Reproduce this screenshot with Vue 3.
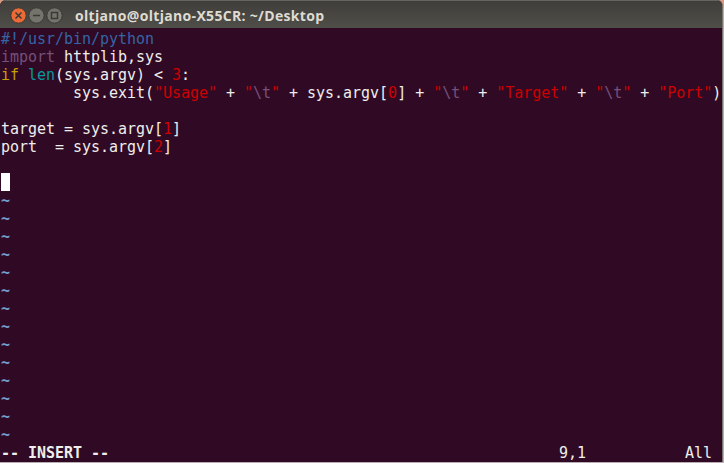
<script setup>
const c = (t, k = 'fg') => ({ t, k })
const lines = [
  [c('#!/usr/bin/python', 'comment')],
  [c('import', 'pre'), c(' httplib,sys')],
  [c('if', 'kw'), c(' '), c('len', 'fn'), c('(sys.argv) < '), c('3', 'num'), c(':')],
  [c('        sys.exit('), c('"Usage"', 'str'), c(' + '), c('"', 'str'), c('\\t', 'pre'), c('"', 'str'), c(' + sys.argv['), c('0', 'num'), c('] + '), c('"', 'str'), c('\\t', 'pre'), c('"', 'str'), c(' + '), c('"Target"', 'str'), c(' + '), c('"', 'str'), c('\\t', 'pre'), c('"', 'str'), c(' + '), c('"Port"', 'str'), c(')')],
  [c(' ')],
  [c('target = sys.argv['), c('1', 'num'), c(']')],
  [c('port  = sys.argv['), c('2', 'num'), c(']')],
  [c(' ')],
  [c(' ', 'cursor')],
  ...Array.from({ length: 14 }, () => [c('~', 'tilde')]),
  [c('-- INSERT --', 'bold'), c(' '.repeat(50) + '9,1' + ' '.repeat(11) + 'All')],
]
const buttons = [
  { name: 'close', glyph: 'M-3-3L3 3M3-3L-3 3' },
  { name: 'min', glyph: 'M-3.5 0H3.5' },
  { name: 'max', glyph: 'M-3-3H3V3H-3Z' },
]
</script>

<template>
  <div class="window">
    <header class="titlebar">
      <div class="buttons">
        <svg v-for="b in buttons" :key="b.name" class="btn" :class="b.name" viewBox="-8.5 -8.5 17 17" width="17" height="17">
          <circle r="7.7" class="face" />
          <path :d="b.glyph" class="glyph" />
        </svg>
      </div>
      <span class="title">oltjano@oltjano-X55CR: ~/Desktop</span>
    </header>
    <main class="term">
      <div v-for="(line, i) in lines" :key="i" class="row"><span v-for="(s, j) in line" :key="j" :class="s.k">{{ s.t }}</span></div>
    </main>
  </div>
</template>

<style>
html, body { margin: 0; height: 463px; overflow: hidden; background: linear-gradient(#d89a80 0 8px, #b8adb0 8px); }
</style>

<style scoped>
.window {
  width: 723px;
  height: 462px;
  box-sizing: border-box;
  display: flex;
  flex-direction: column;
  background: #300a24;
  border-right: 1px solid #77756e;
  border-radius: 6px 6px 0 0;
  overflow: hidden;
}
.titlebar {
  height: 28px;
  flex: none;
  box-sizing: border-box;
  display: flex;
  align-items: center;
  padding: 2px 0 0 10px;
  border-top: 1px solid #66645e;
  background: linear-gradient(#3f3e3a, #4f4e49);
}
.buttons { display: flex; gap: 1px; width: 65px; flex: none; }
.btn { display: block; }
.face { fill: #74736c; stroke: #3a3934; stroke-width: 1; }
.close .face { fill: #ec6a35; }
.glyph { fill: none; stroke: #3a3934; stroke-width: 1.5; }
.title {
  font: bold 14px/18px "Open Sans", sans-serif;
  letter-spacing: 0.32px;
  color: #dfdbd2;
  white-space: pre;
}
.term {
  flex: 1;
  padding: 1px 0 0 1px;
  font: 15px/20px "DejaVu Sans Mono", monospace;
  letter-spacing: -0.03px;
  color: #eeeeec;
}
.row { height: 18px; white-space: pre; }
.comment { color: #3465a4; }
.pre { color: #75507b; }
.kw { color: #c4a000; }
.fn { color: #06989a; }
.num, .str { color: #cc0000; }
.tilde { color: #729fcf; font-weight: bold; }
.cursor { display: inline-block; width: 9px; height: 18px; vertical-align: top; background: #ffffff; }
.bold { font-weight: bold; }
</style>
